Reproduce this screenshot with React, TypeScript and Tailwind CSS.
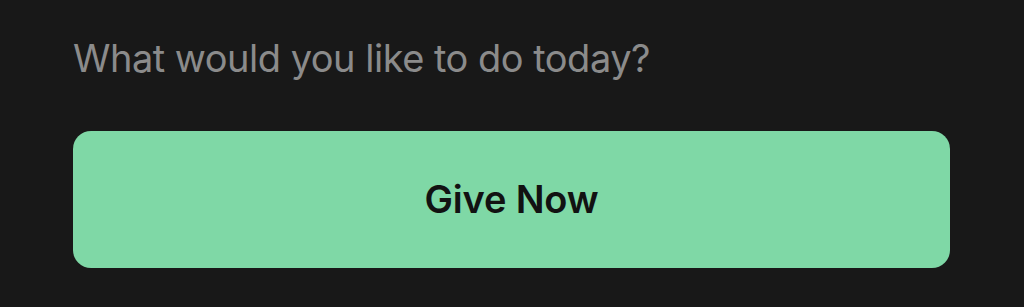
import React from 'react';

const App: React.FC = () => {
    return (
        <div className="w-[1024px] h-[307px] bg-[#181818] px-[73px] pt-[33px] font-['Inter',sans-serif]">
            <p className="text-[38px] leading-[50px] text-[#8b8b8b] tracking-[-0.5px]">
                What would you like to do today?
            </p>
            <button className="mt-[48px] w-[877px] h-[137px] rounded-[18px] bg-[#7fd8a6] flex items-center justify-center">
                <span className="text-[38px] font-semibold text-[#121212] tracking-[-0.2px]">Give Now</span>
            </button>
        </div>
    );
};

export default App;
